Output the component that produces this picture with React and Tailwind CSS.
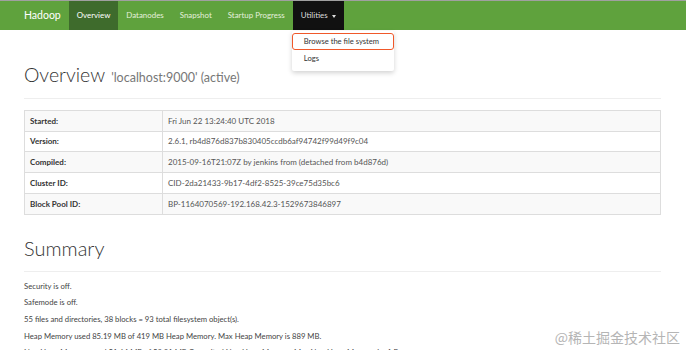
import React from "react";

const navItems = ["Datanodes", "Snapshot", "Startup Progress"];

const overviewRows = [
  ["Started:", "Fri Jun 22 13:24:40 UTC 2018"],
  ["Version:", "2.6.1, rb4d876d837b830405ccdb6af94742f99d49f9c04"],
  ["Compiled:", "2015-09-16T21:07Z by jenkins from (detached from b4d876d)"],
  ["Cluster ID:", "CID-2da21433-9b17-4df2-8525-39ce75d35bc6"],
  ["Block Pool ID:", "BP-1164070569-192.168.42.3-1529673846897"],
];

const summaryLines = [
  "Security is off.",
  "Safemode is off.",
  "55 files and directories, 38 blocks = 93 total filesystem object(s).",
  "Heap Memory used 85.19 MB of 419 MB Heap Memory. Max Heap Memory is 889 MB.",
  "Non Heap Memory used 51.64 MB of 52.81 MB Commited Non Heap Memory. Max Non Heap Memory is -1 B.",
];

const App = () => {
  return (
    <div
      className="relative w-[686px] h-[350px] overflow-hidden bg-white"
      style={{ fontFamily: "Lato, 'Liberation Sans', sans-serif" }}
    >
      <div className="h-px bg-[#a0a0a0]" />
      <div className="relative flex h-[29px] items-stretch bg-[#5fa23d] pl-[24px] text-[7.9px]">
        <div className="flex items-center pr-[8px] text-[10.5px] text-white">Hadoop</div>
        <div className="flex items-center bg-[#3e6b2c] px-[8px] text-white">Overview</div>
        {navItems.map((item) => (
          <div key={item} className="flex items-center px-[8px] text-[#e4f0dc]">
            {item}
          </div>
        ))}
        <div className="relative flex items-center gap-[4px] bg-[#111] px-[8px] text-[#ddd]">
          Utilities
          <span className="mt-px border-x-[2.5px] border-t-[3px] border-x-transparent border-t-[#ddd]" />
          <div className="absolute left-[-1px] top-[30px] z-10 w-[102px] rounded-[2px] bg-white pb-[6px] text-[7.6px] text-[#333] shadow-[0_2px_5px_rgba(0,0,0,0.18)]">
            <div className="mt-[2px] rounded-[3px] border-[1.5px] border-[#f0582a] py-[2px] pl-[11px]">
              Browse the file system
            </div>
            <div className="pl-[12px] pt-[3px]">Logs</div>
          </div>
        </div>
      </div>

      <div className="mx-[24px] w-[637px]">
        <div className="flex items-baseline gap-[6px] pt-[34px] pb-[10px]">
          <h1 className="text-[19.5px] font-light leading-[22px] text-[#333]">Overview</h1>
          <span className="text-[12.5px] text-[#777]">'localhost:9000' (active)</span>
        </div>
        <div className="h-px bg-[#eee]" />

        <table className="mt-[11px] w-full border-collapse border border-[#ddd] text-[8px]">
          <tbody>
            {overviewRows.map(([label, value], i) => (
              <tr key={label} className={i % 2 === 0 ? "h-[20.8px] bg-[#f9f9f9]" : "h-[20.8px] bg-white"}>
                <th className="w-[138px] border border-[#ddd] pl-[5px] text-left font-bold text-[#333]">{label}</th>
                <td className="border border-[#ddd] pl-[5px] text-[#555]">{value}</td>
              </tr>
            ))}
          </tbody>
        </table>

        <h2 className="pt-[22px] pb-[12px] text-[20px] font-light leading-[22px] text-[#333]">Summary</h2>
        <div className="h-px bg-[#eee]" />
        <div className="flex flex-col gap-[7px] pt-[10px] text-[7.7px] leading-[9.6px] text-[#444]">
          {summaryLines.map((line) => (
            <p key={line} className="whitespace-nowrap">{line}</p>
          ))}
        </div>
      </div>

      <div
        className="absolute right-[6px] top-[327px] text-[14px] text-[#b5b5b5]"
        style={{ fontFamily: "'Noto Sans CJK SC', sans-serif" }}
      >
        @稀土掘金技术社区
      </div>
    </div>
  );
};

export default App;
